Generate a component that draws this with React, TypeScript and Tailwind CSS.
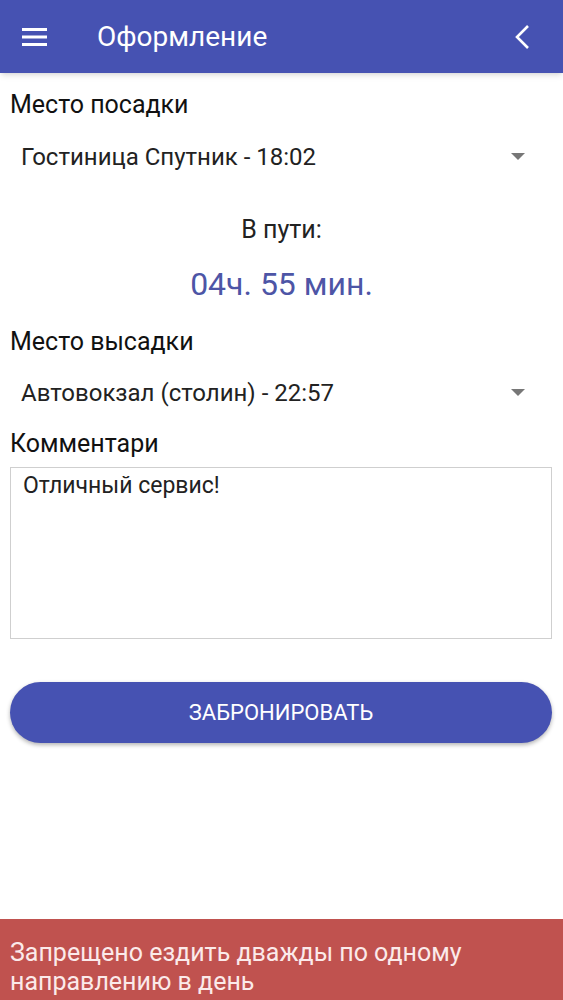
import React from "react";

function Caret() {
  return (
    <svg width="14" height="8" viewBox="0 0 14 8" className="shrink-0">
      <path d="M0 0 L14 0 L7 7 Z" fill="#777" />
    </svg>
  );
}

function Spinner({ value }: { value: string }) {
  return (
    <div className="flex h-[50px] items-center justify-between pl-[21px] pr-[38px]">
      <span className="text-[24px] text-[#222]">{value}</span>
      <Caret />
    </div>
  );
}

export default function App() {
  return (
    <div
      className="relative flex h-[1000px] w-[563px] flex-col overflow-hidden bg-white"
      style={{ fontFamily: "Roboto, 'Noto Sans', sans-serif" }}
    >
      <header className="flex h-[73px] shrink-0 items-center bg-[#4652b2] shadow-md">
        <svg width="26" height="18" viewBox="0 0 26 18" className="ml-[22px]">
          <rect x="0" y="0" width="25" height="3" fill="white" />
          <rect x="0" y="7.5" width="25" height="3" fill="white" />
          <rect x="0" y="15" width="25" height="3" fill="white" />
        </svg>
        <h1 className="ml-[49px] text-[28px] font-normal text-white">Оформление</h1>
        <svg width="16" height="26" viewBox="0 0 16 26" className="ml-auto mr-[33px]">
          <path d="M14 2 L3 13 L14 24" stroke="white" strokeWidth="2.6" fill="none" />
        </svg>
      </header>

      <main className="flex flex-col px-[10px] pt-[17px]">
        <div className="text-[25px] leading-[30px] text-[#111]">Место посадки</div>
        <div className="-mx-[10px] mt-[12px]">
          <Spinner value="Гостиница Спутник - 18:02" />
        </div>

        <div className="mt-[33px] text-center text-[25px] leading-[30px] text-[#222]">В пути:</div>
        <div className="mt-[20px] text-center text-[32px] leading-[38px] text-[#4d55a6]">04ч. 55 мин.</div>

        <div className="mt-[24px] text-[25px] leading-[30px] text-[#111]">Место высадки</div>
        <div className="-mx-[10px] mt-[11px]">
          <Spinner value="Автовокзал (столин) - 22:57" />
        </div>

        <div className="mt-[11px] text-[25px] leading-[30px] text-[#111]">Комментари</div>
        <div className="mt-[8px] h-[172px] w-[542px] border border-[#cfcfcf] px-[12px] pt-[4px] text-[23px] leading-[28px] text-[#222]">
          Отличный сервис!
        </div>

        <button className="mt-[43px] h-[61px] w-[542px] rounded-full bg-[#4652b2] text-[22px] text-white shadow-[0_2px_4px_rgba(0,0,0,0.3)]">
          ЗАБРОНИРОВАТЬ
        </button>
      </main>

      <footer className="mt-auto h-[81px] bg-[#c0524f] px-[10px] pt-[19px] text-[25px] leading-[29px] text-[#fbeaea]">
        Запрещено ездить дважды по одному
        <br />
        направлению в день
      </footer>
    </div>
  );
}
